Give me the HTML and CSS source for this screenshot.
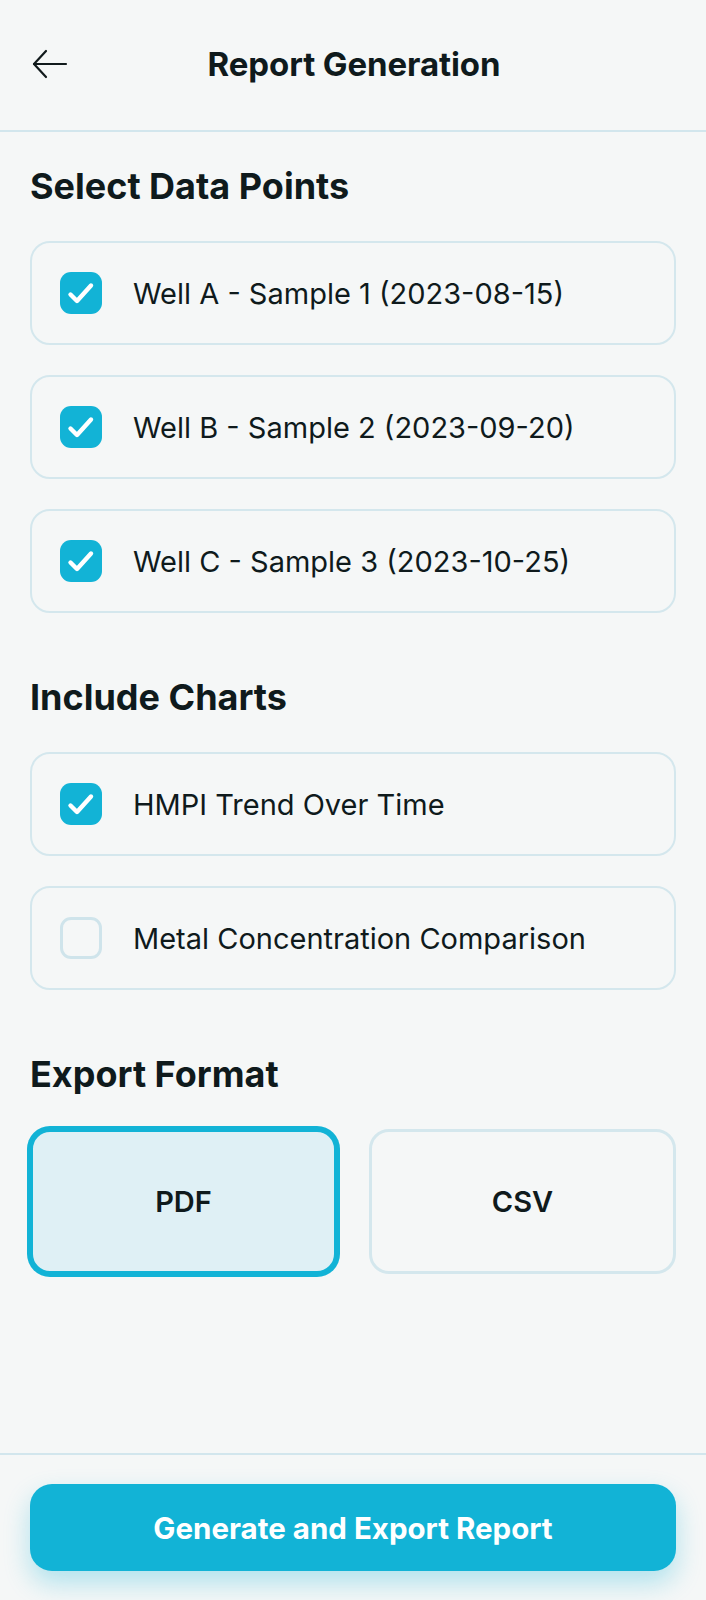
FILE: index.html
```html
<!DOCTYPE html>
<html lang="en">
<head>
<meta charset="utf-8">
<title>Report Generation</title>
<link rel="stylesheet" href="styles.css">
</head>
<body>
<div class="screen">
  <header class="topbar">
    <button class="back" aria-label="Back">
      <svg width="36" height="30" viewBox="0 0 36 30" fill="none" stroke="#111a1c" stroke-width="2.2" stroke-linecap="round" stroke-linejoin="round">
        <path d="M2 15H34"/>
        <path d="M14 2L2 15L14 28"/>
      </svg>
    </button>
    <h1 class="title">Report Generation</h1>
    <span class="spacer"></span>
  </header>

  <main class="content">
    <section class="section">
      <h2 class="section-title">Select Data Points</h2>
      <div class="list">
        <label class="option">
          <span class="check on"><svg viewBox="0 0 42 42" width="42" height="42" fill="none" stroke="#fff" stroke-width="4.4" stroke-linecap="round" stroke-linejoin="round"><path d="M10.5 22.5L17 29L31 13.5"/></svg></span>
          <span class="option-text">Well A - Sample 1 (2023-08-15)</span>
        </label>
        <label class="option">
          <span class="check on"><svg viewBox="0 0 42 42" width="42" height="42" fill="none" stroke="#fff" stroke-width="4.4" stroke-linecap="round" stroke-linejoin="round"><path d="M10.5 22.5L17 29L31 13.5"/></svg></span>
          <span class="option-text">Well B - Sample 2 (2023-09-20)</span>
        </label>
        <label class="option">
          <span class="check on"><svg viewBox="0 0 42 42" width="42" height="42" fill="none" stroke="#fff" stroke-width="4.4" stroke-linecap="round" stroke-linejoin="round"><path d="M10.5 22.5L17 29L31 13.5"/></svg></span>
          <span class="option-text">Well C - Sample 3 (2023-10-25)</span>
        </label>
      </div>
    </section>

    <section class="section">
      <h2 class="section-title">Include Charts</h2>
      <div class="list">
        <label class="option">
          <span class="check on"><svg viewBox="0 0 42 42" width="42" height="42" fill="none" stroke="#fff" stroke-width="4.4" stroke-linecap="round" stroke-linejoin="round"><path d="M10.5 22.5L17 29L31 13.5"/></svg></span>
          <span class="option-text">HMPI Trend Over Time</span>
        </label>
        <label class="option">
          <span class="check off"></span>
          <span class="option-text">Metal Concentration Comparison</span>
        </label>
      </div>
    </section>

    <section class="section">
      <h2 class="section-title">Export Format</h2>
      <div class="formats">
        <div class="format selected">PDF</div>
        <div class="format">CSV</div>
      </div>
    </section>
  </main>

  <footer class="footer">
    <button class="primary">Generate and Export Report</button>
  </footer>
</div>
</body>
</html>
```

FILE: styles.css
```css
* { box-sizing: border-box; }

html, body {
  margin: 0;
  padding: 0;
  background: #f5f7f7;
}

body {
  font-family: Inter, "Noto Sans", sans-serif;
  color: #0f1a1c;
}

.screen {
  height: 1600px;
  display: flex;
  flex-direction: column;
}

.topbar {
  height: 132px;
  flex: none;
  display: flex;
  align-items: center;
  padding: 0 30px 2px 32px;
  border-bottom: 2px solid #d2e6ed;
}

.back {
  width: 40px;
  height: 40px;
  padding: 0;
  border: 0;
  background: none;
  display: flex;
  align-items: center;
  justify-content: flex-start;
}

.title {
  flex: 1;
  margin: 0;
  text-align: center;
  font-size: 33px;
  font-weight: 700;
  letter-spacing: -0.1px;
}

.spacer { width: 40px; }

.content {
  flex: 1;
  padding: 33px 30px 0;
  display: flex;
  flex-direction: column;
  gap: 63px;
}

.section-title {
  margin: 0 0 34px;
  font-size: 36px;
  line-height: 42px;
  font-weight: 700;
  letter-spacing: 0;
}

.list {
  display: flex;
  flex-direction: column;
  gap: 30px;
}

.option {
  height: 104px;
  display: flex;
  align-items: center;
  gap: 31px;
  padding: 0 28px;
  border: 2px solid #d4e7ed;
  border-radius: 20px;
}

.check {
  width: 42px;
  height: 42px;
  flex: none;
  border-radius: 11px;
  display: flex;
  align-items: center;
  justify-content: center;
}

.check.on { background: #12b3d6; }

.check.off {
  border: 3px solid #cfe4eb;
}

.option-text {
  font-size: 29px;
  font-weight: 400;
  letter-spacing: 0;
}

.formats {
  display: grid;
  grid-template-columns: 1fr 1fr;
  gap: 32px;
}

.format {
  height: 145px;
  display: flex;
  align-items: center;
  justify-content: center;
  font-size: 29px;
  font-weight: 600;
  border: 3px solid #d4e7ed;
  border-radius: 20px;
}

.format.selected {
  background: #dff0f5;
  border-color: #12b3d6;
  box-shadow: 0 0 0 3px #12b3d6;
}

.footer {
  flex: none;
  border-top: 2px solid #d2e6ed;
  padding: 29px 30px 29px;
}

.primary {
  width: 100%;
  height: 87px;
  border: 0;
  border-radius: 22px;
  background: #12b3d6;
  color: #fff;
  font-family: Inter, "Noto Sans", sans-serif;
  font-size: 29.5px;
  font-weight: 700;
  box-shadow: 0 12px 26px rgba(18, 179, 214, 0.3);
}
```
